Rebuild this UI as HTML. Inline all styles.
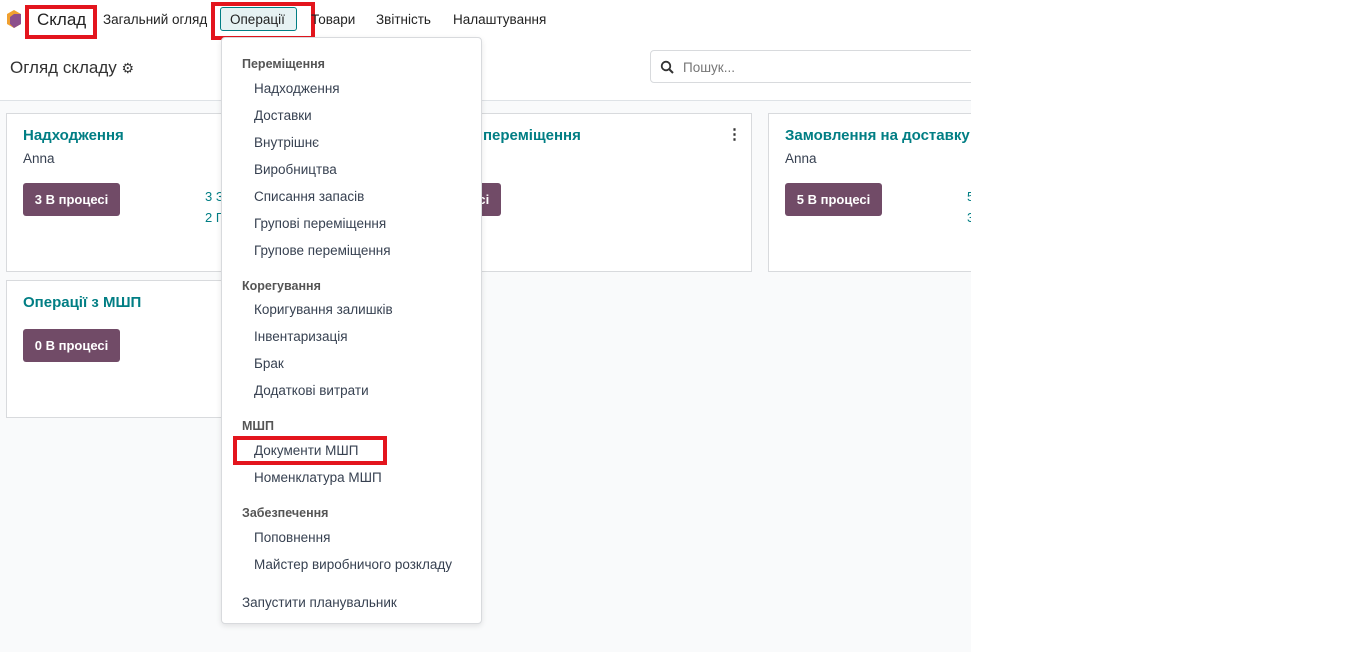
<!DOCTYPE html>
<html><head><meta charset="utf-8"><style>
*{box-sizing:border-box;margin:0;padding:0}
body{width:1350px;height:652px;background:#fff;font-family:"Liberation Sans","Noto Sans CJK SC",sans-serif;color:#374151;position:relative;overflow:hidden;font-size:13px}
.wrap{position:absolute;left:0;top:0;width:971px;height:652px;overflow:hidden}
.gray{position:absolute;left:0;top:100px;width:971px;height:552px;background:#f9fafb;border-top:1px solid #dee2e6}
.a{position:absolute;white-space:nowrap}
.red{position:absolute;border:4px solid #e3151d}
.card{position:absolute;background:#fff;border:1px solid #d8dadd}
.title{color:#017e84;font-size:15px;font-weight:bold}
.btn{position:absolute;background:#714b67;color:#fff;font-weight:bold;font-size:13px;border-radius:3px;text-align:center;line-height:33px;height:33px}
.menu{position:absolute;left:221px;top:37px;width:261px;height:587px;background:#fff;border:1px solid #d8dadd;border-radius:4px;box-shadow:0 2px 6px rgba(0,0,0,.1)}
.h{position:absolute;left:20px;font-size:12.5px;font-weight:bold;color:#555}
.i{position:absolute;left:32px;font-size:13.5px;color:#374151}
</style></head><body>
<div class="wrap">
<div class="gray"></div>
<svg class="a" style="left:6px;top:9px" width="16" height="20" viewBox="0 0 16 20"><polygon points="8,1 15,5 15,15 8,19 1,15 1,5" fill="#f0a030"/><polygon points="8,5 15,5 15,15 8,19 4,15 4,8" fill="#8c4f8c"/></svg>
<div class="a" style="left:37px;top:10px;font-size:17px;color:#222">Склад</div>
<div class="red" style="left:25px;top:5px;width:72px;height:34px"></div>
<div class="a" style="left:103px;top:12px;font-size:13.5px;color:#222">Загальний огляд</div>
<div class="a" style="left:220px;top:7px;width:77px;height:24px;background:#e6f2f3;border:1px solid #017e84;border-radius:3px"></div>
<div class="a" style="left:230px;top:12px;font-size:13.5px;color:#222">Операції</div>
<div class="red" style="left:211px;top:2px;width:104px;height:38px"></div>
<div class="a" style="left:311px;top:12px;font-size:13.5px;color:#222">Товари</div>
<div class="a" style="left:376px;top:12px;font-size:13.5px;color:#222">Звітність</div>
<div class="a" style="left:453px;top:12px;font-size:13.5px;color:#222">Налаштування</div>
<div class="a" style="left:10px;top:58px;font-size:17px;color:#333">Огляд складу <span style="font-size:14px">⚙</span></div>
<div class="a" style="left:650px;top:50px;width:340px;height:33px;border:1px solid #d8dadd;border-radius:4px;background:#fff"></div>
<svg class="a" style="left:660px;top:60px" width="14" height="14" viewBox="0 0 14 14"><circle cx="6" cy="6" r="4.3" fill="none" stroke="#333" stroke-width="1.8"/><line x1="9" y1="9" x2="13" y2="13" stroke="#333" stroke-width="2"/></svg>
<div class="a" style="left:683px;top:60px;font-size:13.5px;color:#777">Пошук...</div>

<div class="card" style="left:6px;top:113px;width:365px;height:159px">
<div class="a title" style="left:16px;top:13px">Надходження</div>
<div class="a" style="left:16px;top:37px;font-size:13.5px">Anna</div>
<div class="btn" style="left:16px;top:69px;width:97px">3 В процесі</div>
<div class="a" style="left:198px;top:72px;color:#017e84;line-height:21px">3 З<br>2 П</div>
</div>
<div class="card" style="left:387px;top:113px;width:365px;height:159px">
<div class="a title" style="left:16px;top:13px">Внутрішні переміщення</div>
<div class="a" style="left:339px;top:11px;font-weight:bold;font-size:15px;color:#333">⋮</div>
<div class="btn" style="left:16px;top:69px;width:97px">3 В процесі</div>
</div>
<div class="card" style="left:768px;top:113px;width:365px;height:159px">
<div class="a title" style="left:16px;top:13px">Замовлення на доставку</div>
<div class="a" style="left:16px;top:37px;font-size:13.5px">Anna</div>
<div class="btn" style="left:16px;top:69px;width:97px">5 В процесі</div>
<div class="a" style="left:198px;top:72px;color:#017e84;line-height:21px">5<br>3</div>
</div>
<div class="card" style="left:6px;top:280px;width:365px;height:138px">
<div class="a title" style="left:16px;top:13px">Операції з МШП</div>
<div class="btn" style="left:16px;top:48px;width:97px">0 В процесі</div>
</div>

<div class="menu">
<div class="h" style="top:19px">Переміщення</div>
<div class="i" style="top:43px">Надходження</div>
<div class="i" style="top:70px">Доставки</div>
<div class="i" style="top:97px">Внутрішнє</div>
<div class="i" style="top:124px">Виробництва</div>
<div class="i" style="top:151px">Списання запасів</div>
<div class="i" style="top:178px">Групові переміщення</div>
<div class="i" style="top:205px">Групове переміщення</div>
<div class="h" style="top:241px">Корегування</div>
<div class="i" style="top:264px">Коригування залишків</div>
<div class="i" style="top:291px">Інвентаризація</div>
<div class="i" style="top:318px">Брак</div>
<div class="i" style="top:345px">Додаткові витрати</div>
<div class="h" style="top:381px">МШП</div>
<div class="i" style="top:405px">Документи МШП</div>
<div class="i" style="top:432px">Номенклатура МШП</div>
<div class="h" style="top:468px">Забезпечення</div>
<div class="i" style="top:492px">Поповнення</div>
<div class="i" style="top:519px">Майстер виробничого розкладу</div>
<div class="i" style="top:557px;left:20px">Запустити планувальник</div>
</div>
<div class="red" style="left:233px;top:436px;width:154px;height:29px"></div>
</div>
</body></html>
